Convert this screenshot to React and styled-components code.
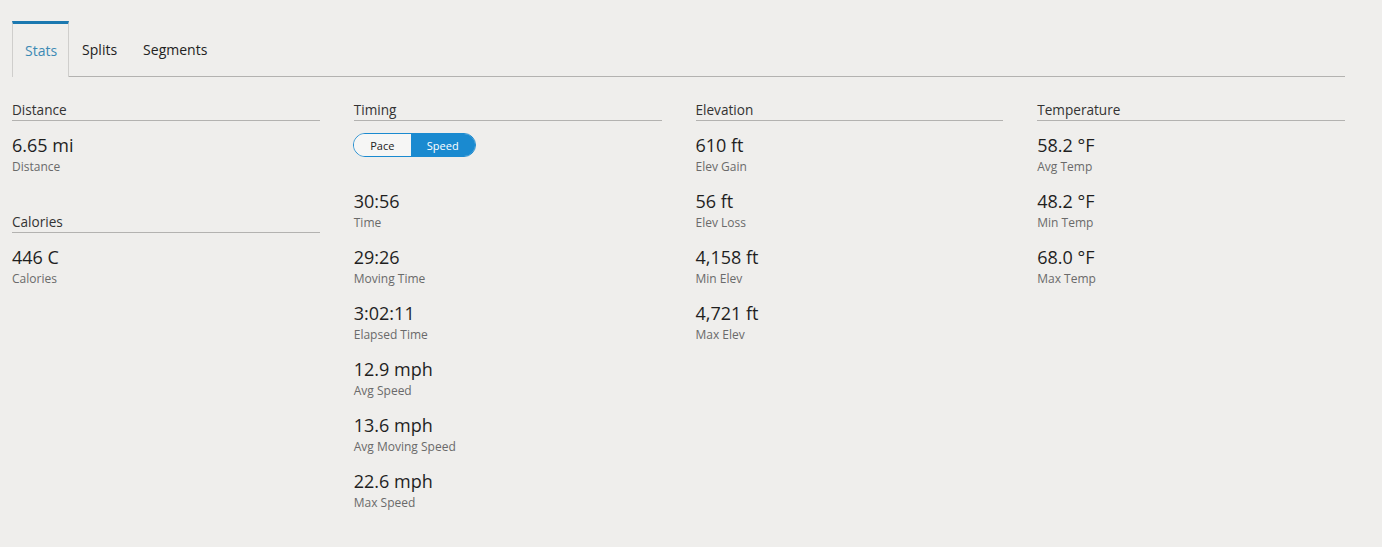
import React from "react";
import styled, { createGlobalStyle } from "styled-components";

const Global = createGlobalStyle`
  html, body { margin: 0; padding: 0; background: #efeeec; }
  body { font-family: "Open Sans", "Liberation Sans", sans-serif; color: #222; }
`;

const Page = styled.div`
  width: 1333px;
  padding: 21px 37px 20px 12px;
`;

const TabBar = styled.div`
  display: flex;
  height: 55px;
  border-bottom: 1px solid #b3b2b0;
`;

const Tab = styled.div`
  display: flex;
  align-items: center;
  padding: 2px 13px 0;
  font-size: 14px;
  color: ${(p) => (p.$active ? "#3d8ab4" : "#222")};
  ${(p) =>
    p.$active &&
    `
    border-top: 3px solid #1b78b0;
    border-left: 1px solid #cfcecc;
    border-right: 1px solid #cfcecc;
    margin-bottom: -1px;
    background: #efeeec;
    padding: 0 11px 0 12px;
    height: 53px;
  `}
`;

const Grid = styled.div`
  display: grid;
  grid-template-columns: repeat(4, 1fr);
  column-gap: 34px;
  margin-top: 23px;
`;

const Column = styled.div`
  display: flex;
  flex-direction: column;
`;

const Section = styled.div`
  & + & { margin-top: 23px; }
`;

const Header = styled.div`
  font-size: 13.6px;
  line-height: 20px;
  color: #333;
  border-bottom: 1px solid #b3b2b0;
  margin-bottom: 12px;
`;

const Item = styled.div`
  margin-bottom: 13px;
`;

const Value = styled.div`
  font-size: 18px;
  line-height: 24px;
  color: #1f1f1f;
`;

const Label = styled.div`
  font-size: 12px;
  line-height: 18px;
  margin-top: 1px;
  color: #6a6a6a;
`;

const Toggle = styled.div`
  display: inline-flex;
  align-self: flex-start;
  height: 24px;
  border: 1px solid #1a8ad0;
  border-radius: 13px;
  overflow: hidden;
  box-sizing: border-box;
  margin-bottom: 32px;
  margin-left: -1px;
`;

const ToggleOption = styled.div`
  display: flex;
  align-items: center;
  justify-content: center;
  width: ${(p) => p.$w}px;
  font-size: 11px;
  background: ${(p) => (p.$on ? "#1a8ad0" : "#f6f6f5")};
  color: ${(p) => (p.$on ? "#fff" : "#222")};
`;

const Stat = ({ value, label }) => (
  <Item>
    <Value>{value}</Value>
    <Label>{label}</Label>
  </Item>
);

export default function App() {
  return (
    <>
      <Global />
      <Page>
        <TabBar>
          <Tab $active>Stats</Tab>
          <Tab>Splits</Tab>
          <Tab>Segments</Tab>
        </TabBar>
        <Grid>
          <Column>
            <Section>
              <Header>Distance</Header>
              <Stat value="6.65 mi" label="Distance" />
            </Section>
            <Section>
              <Header>Calories</Header>
              <Stat value="446 C" label="Calories" />
            </Section>
          </Column>
          <Column>
            <Header>Timing</Header>
            <Toggle>
              <ToggleOption $w={57}>Pace</ToggleOption>
              <ToggleOption $w={64} $on>
                Speed
              </ToggleOption>
            </Toggle>
            <Stat value="30:56" label="Time" />
            <Stat value="29:26" label="Moving Time" />
            <Stat value="3:02:11" label="Elapsed Time" />
            <Stat value="12.9 mph" label="Avg Speed" />
            <Stat value="13.6 mph" label="Avg Moving Speed" />
            <Stat value="22.6 mph" label="Max Speed" />
          </Column>
          <Column>
            <Header>Elevation</Header>
            <Stat value="610 ft" label="Elev Gain" />
            <Stat value="56 ft" label="Elev Loss" />
            <Stat value="4,158 ft" label="Min Elev" />
            <Stat value="4,721 ft" label="Max Elev" />
          </Column>
          <Column>
            <Header>Temperature</Header>
            <Stat value="58.2 °F" label="Avg Temp" />
            <Stat value="48.2 °F" label="Min Temp" />
            <Stat value="68.0 °F" label="Max Temp" />
          </Column>
        </Grid>
      </Page>
    </>
  );
}
